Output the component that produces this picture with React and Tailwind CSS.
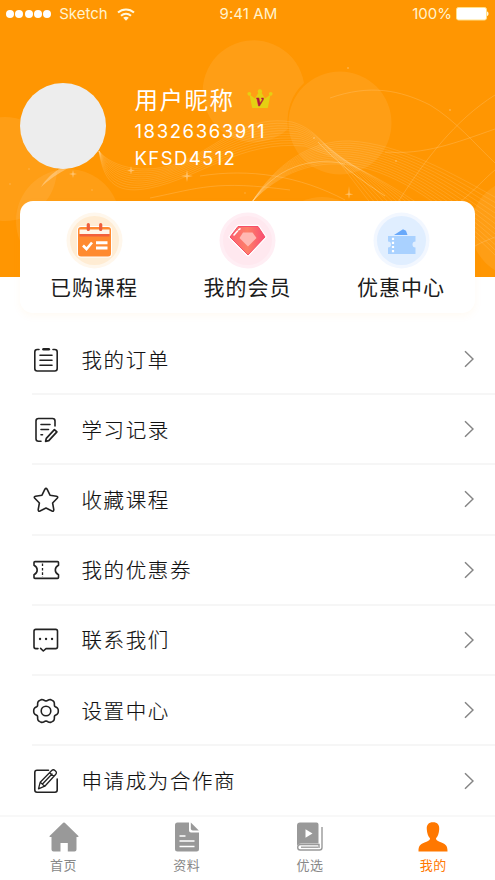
import React from 'react';

const menuItems = [
  { label: '我的订单', icon: OrderIcon },
  { label: '学习记录', icon: RecordIcon },
  { label: '收藏课程', icon: StarIcon },
  { label: '我的优惠券', icon: CouponIcon },
  { label: '联系我们', icon: ChatIcon },
  { label: '设置中心', icon: GearIcon },
  { label: '申请成为合作商', icon: EditIcon },
];

const shortcuts = [
  { label: '已购课程', icon: CalendarBadge },
  { label: '我的会员', icon: DiamondBadge },
  { label: '优惠中心', icon: TicketBadge },
];

const tabs = [
  { label: '首页', icon: HomeIcon },
  { label: '资料', icon: FileIcon },
  { label: '优选', icon: BookIcon },
  { label: '我的', icon: UserIcon, active: true },
];

// lines in between two curves, both given as flat lists of cubic points
function ribbon(from, to, count) {
  return Array.from({ length: count }, (_, i) => {
    const t = i / (count - 1);
    const p = from.map((v, k) => (v + (to[k] - v) * t).toFixed(1));
    return `M${p[0]} ${p[1]}C${p.slice(2).join(' ')}`;
  });
}

const waves = [
  ...ribbon(
    [99, 151, 112, 168, 150, 178, 190, 158, 225, 140, 250, 115, 292, 122, 320, 130, 330, 152, 372, 205],
    [99, 151, 104, 186, 120, 194, 150, 188, 200, 178, 240, 140, 305, 146, 330, 156, 370, 170, 420, 205],
    11
  ),
  ...ribbon(
    [252, 202, 275, 165, 310, 140, 350, 141, 400, 144, 450, 172, 500, 200],
    [252, 202, 280, 172, 315, 160, 350, 165, 400, 172, 450, 210, 500, 260],
    12
  ),
];

// six rounded teeth, one pointing right
const gearPoints = Array.from({ length: 72 }, (_, i) => {
  const a = (i / 72) * Math.PI * 2;
  const r = 11.4 + 1.2 * Math.cos(6 * a) - 0.3 * Math.cos(12 * a);
  return `${(14 + r * Math.cos(a)).toFixed(2)},${(14 + r * Math.sin(a)).toFixed(2)}`;
}).join(' ');

function HeaderArt() {
  return (
    <svg className="absolute inset-0" width="495" height="277" viewBox="0 0 495 277" fill="none">
      <g fill="#fff" fillOpacity="0.08">
        <path d="M304 83A51 51 0 1 0 288 129A52 52 0 0 1 304 83Z" />
        <circle cx="340" cy="123" r="51.5" />
        <circle cx="5" cy="169" r="52" />
        <circle cx="68" cy="221" r="52" />
        <circle cx="520" cy="228" r="49" />
        <circle cx="322" cy="248" r="51" />
      </g>
      <g stroke="#ffe3b0" strokeOpacity="0.24" strokeWidth="0.7">
        {waves.map((d) => <path key={d} d={d} />)}
      </g>
      <g stroke="#ffd9a0" strokeOpacity="0.25" strokeWidth="1">
        <path d="M330 98C370 84 400 90 430 105C455 120 475 144 495 163" />
        <path d="M398 202C425 160 455 120 495 95" />
        <path d="M385 152C425 155 455 143 495 129" />
        <path d="M460 202C475 190 485 178 495 170" />
        <path d="M200 176C250 168 300 176 345 200" />
        <path d="M150 198C200 188 215 180 290 190" />
        <path d="M475 246C482 242 488 240 495 237" />
      </g>
      <path d="M252 202C275 168 310 156 345 164" stroke="#ffe3b0" strokeOpacity="0.35" />
      <path d="M318 142C335 160 352 174 385 196" stroke="#ffe3b0" strokeOpacity="0.4" />
      <path d="M41 187C50 172 70 160 99 151C75 165 57 172 41 187Z" fill="#fff" fillOpacity="0.3" />
      <g fill="#fff" fillOpacity="0.4">
        <path d="M73 170l.7 3.3 3.3.7-3.3.7-.7 3.3-.7-3.3-3.3-.7 3.3-.7z" />
        <path d="M131 166l.7 3.8 3.3.7-3.3.7-.7 3.3-.7-3.3-3.3-.7 3.3-.7z" />
        <path d="M187 170l.9 5.3 5.1.7-5.1.9-.9 5.1-.9-5.1-5.1-.9 5.1-.7z" />
        <path d="M349 186l.7 7.5 3.5.7-3.5.7-.7 4-.7-4-3.5-.7 3.5-.7z" />
      </g>
      <g fill="#fff" fillOpacity="0.25">
        <circle cx="348" cy="68" r="1" />
        <circle cx="450" cy="110" r="1" />
        <circle cx="396" cy="161" r="1" />
        <circle cx="314" cy="138" r="1" />
        <circle cx="29" cy="169" r=".8" />
        <circle cx="10" cy="184" r=".8" />
        <circle cx="92" cy="190" r=".8" />
        <circle cx="245" cy="193" r=".8" />
      </g>
    </svg>
  );
}

function StatusBar() {
  return (
    <div className="relative grid h-7 grid-cols-3 items-center pr-[6px] pl-[6px] font-['Inter',sans-serif] text-[15px] text-[#fff3cf]">
      <div className="flex items-center">
        <div className="mr-[8px] flex gap-[1.3px]">
          {[0, 1, 2, 3, 4].map((i) => <span key={i} className="size-2 rounded-full bg-white" />)}
        </div>
        <span className="pt-px">Sketch</span>
        <svg className="ml-[9px]" width="18" height="13" viewBox="0 0 18 13" fill="none" stroke="#fff8e0" strokeWidth="2">
          <path d="M1 4.6C5.5 .5 12.5 .5 17 4.6M4 7.8C7 5.2 11 5.2 14 7.8" />
          <path d="M6.2 9.8C7.9 8.5 10.1 8.5 11.8 9.8L9 12.7Z" fill="#fff8e0" stroke="none" />
        </svg>
      </div>
      <span className="pt-px pl-[2px] text-center text-[15px] tracking-[0.1px]">9:41 AM</span>
      <div className="flex items-center justify-end gap-[4px]">
        <span className="pt-px">100%</span>
        <svg width="33" height="14" viewBox="0 0 33 14">
          <rect x=".5" y=".5" width="30" height="12.5" rx="2" fill="#fff" stroke="#ffe08a" />
          <path d="M31 4.5c2 .5 2 4 0 4.5z" fill="#fff8e0" />
        </svg>
      </div>
    </div>
  );
}

function Crown() {
  return (
    <svg className="mb-[2px]" width="26" height="20" viewBox="0 0 26 20" fill="#e6cf12">
      <path d="M2.5 5.5L8 9.5L11.5 3.5H14.3L18 9.5L23.5 5.5L20.8 19H5.2Z" />
      <circle cx="2.3" cy="4.8" r="1.9" />
      <circle cx="12.9" cy="2.4" r="2.2" />
      <circle cx="23.7" cy="4.8" r="1.9" />
      <text x="9.3" y="17" fontFamily="Liberation Serif" fontSize="16" fontWeight="700" fontStyle="italic" fill="#b3123c" stroke="#b3123c" strokeWidth=".4">v</text>
    </svg>
  );
}

function CalendarBadge() {
  return (
    <svg width="57" height="57" viewBox="0 0 57 57">
      <circle cx="28.5" cy="28.5" r="28" fill="#fff7ec" />
      <circle cx="28.5" cy="28.5" r="24.5" fill="#ffecd3" />
      <rect x="11" y="14" width="35" height="31.5" rx="4" fill="#fff" />
      <rect x="12" y="15" width="33" height="29.5" rx="3" fill="#ff8a30" />
      <path d="M13.5 17.5H43.5V22H13.5Z" fill="#fff6ea" />
      <path d="M13.5 22H43.5V24.5H13.5Z" fill="#f2603c" />
      <path d="M22.3 12.5V17.5M34.7 12.5V17.5" stroke="#ee5e3c" strokeWidth="3.2" strokeLinecap="round" />
      <path d="M17 33.5L20.5 37L26 30.5" fill="none" stroke="#fff" strokeWidth="2.6" />
      <path d="M30 30.7H41.5M30 36H41.5" stroke="#fff" strokeWidth="3" />
    </svg>
  );
}

function DiamondBadge() {
  return (
    <svg width="57" height="57" viewBox="0 0 57 57">
      <defs>
        <linearGradient id="gem" x1="0" y1="0" x2="1" y2="0">
          <stop offset="0" stopColor="#fc5f70" />
          <stop offset=".5" stopColor="#fd8068" />
          <stop offset="1" stopColor="#f94c71" />
        </linearGradient>
      </defs>
      <circle cx="28.5" cy="28.5" r="28" fill="#ffeef4" />
      <circle cx="28.5" cy="28.5" r="24.5" fill="#ffe8ef" />
      <path d="M19 14H39L46.5 25L29 43.5L10.5 25Z" fill="url(#gem)" stroke="#fff" strokeWidth="2.4" strokeLinejoin="round" />
      <path d="M19 14.5H39L46 25L29 43L11 25Z" fill="url(#gem)" stroke="#f65069" strokeWidth="1" strokeLinejoin="round" />
      <path d="M24 20.5H33.5L37.5 26L29 34.5L20.5 26Z" fill="#ffb8b3" />
      <path d="M15 23L18.5 19M19.8 17.7L21 16.9" stroke="#fff" strokeWidth="1.6" strokeLinecap="round" />
    </svg>
  );
}

function TicketBadge() {
  return (
    <svg width="57" height="57" viewBox="0 0 57 57">
      <circle cx="28.5" cy="28.5" r="28" fill="#f2f7ff" />
      <circle cx="28.5" cy="28.5" r="24.5" fill="#e0eeff" />
      <path d="M21 23L30 17.2L33 18.8L34.5 23Z" fill="#68a8fa" />
      <path d="M15 24H42.5V29.5A3 3 0 0 0 42.5 35.5V42H15V35.5A3 3 0 0 0 15 29.5Z" fill="#a9d1ff" />
      <path d="M20 25.7V41" stroke="#fff" strokeWidth="2.2" strokeDasharray="2.2 1.9" />
    </svg>
  );
}

function LineIcon({ children }) {
  return (
    <svg className="mt-px" width="28" height="28" viewBox="0 0 28 28" fill="none" stroke="#222" strokeWidth="1.6" strokeLinejoin="round" strokeLinecap="round">
      {children}
    </svg>
  );
}

function OrderIcon() {
  return (
    <LineIcon>
      <path d="M7 3.5H5.2Q2.8 3.5 2.8 6V22.5Q2.8 25 5.2 25H22.8Q25.2 25 25.2 22.5V6Q25.2 3.5 22.8 3.5H21" />
      <path d="M11.5 3.3H16.8" strokeWidth="2.6" />
      <path d="M8 9.2H20M8 14.2H20M8 19.2H20" />
    </LineIcon>
  );
}

function RecordIcon() {
  return (
    <LineIcon>
      <path d="M9 25.2H6.5Q4 25.2 4 22.7V5Q4 2.5 6.5 2.5H20.5Q23 2.5 23 5V10" />
      <path d="M9 8.5H18M9 13.5H16.5M9 18.8H10.5" />
      <path d="M14.3 22.4L22.4 13.6L24.9 15.9L16.8 24.7L13.6 25.3Z" strokeWidth="1.7" />
    </LineIcon>
  );
}

function StarIcon() {
  return (
    <LineIcon>
      <path d="M12.9 3.2Q14 1.5 15.1 3.2L18 9.2L24.5 10.2Q26.5 10.7 25.2 12.2L20.6 17L21.8 23.6Q21.8 25.7 20 25L14 22L8 25Q6.2 25.7 6.2 23.6L7.4 17L2.8 12.2Q1.5 10.7 3.5 10.2L10 9.2Z" />
    </LineIcon>
  );
}

function CouponIcon() {
  return (
    <LineIcon>
      <path d="M3 5.6H25.5Q26.5 5.6 26.5 6.6V9.3Q23.3 10.8 23.3 14Q23.3 17.2 26.5 18.7V21.4Q26.5 22.4 25.5 22.4H3Q2 22.4 2 21.4V18.7Q5.2 17.2 5.2 14Q5.2 10.8 2 9.3V6.6Q2 5.6 3 5.6Z" />
      <path d="M10.5 7.5V21" strokeWidth="1.3" strokeDasharray="2.6 1.8" strokeLinecap="butt" />
    </LineIcon>
  );
}

function ChatIcon() {
  return (
    <LineIcon>
      <path d="M6 22.6H3.8Q2 22.6 2 20.8V5.2Q2 3.4 3.8 3.4H23.7Q25.5 3.4 25.5 5.2V20.8Q25.5 22.6 23.7 22.6H14L11.3 25L8.6 22.4" />
      <path d="M8 13H8.1M14 13H14.1M20 13H20.1" strokeWidth="2.3" />
    </LineIcon>
  );
}

function GearIcon() {
  return (
    <LineIcon>
      <circle cx="14" cy="14" r="4.8" />
      <polygon points={gearPoints} />
    </LineIcon>
  );
}

function EditIcon() {
  return (
    <LineIcon>
      <path d="M16.5 3.2H5Q2.8 3.2 2.8 5.4V23Q2.8 25.2 5 25.2H23Q25.2 25.2 25.2 23V12" />
      <path d="M6.5 21.8L8.2 15.2L19.7 3.5Q21.3 2 23.2 3.7Q25.3 5.5 23.8 7.2L12.8 19.2ZM8.2 15.2L12.8 19.2M17.5 5.7L21.8 9.5M10.5 17L20 7" strokeWidth="1.3" />
    </LineIcon>
  );
}

function HomeIcon() {
  return (
    <svg width="30" height="30" viewBox="0 0 30 30" fill="#999">
      <path d="M14.2 .8Q15 .2 15.8 .8L29.4 14Q30 15 28.8 15H27.5V27.5Q27.5 29.5 25.5 29.5H18.8V21H11.5V29.5H4.5Q2.5 29.5 2.5 27.5V15H1.2Q0 15 .6 14Z" />
    </svg>
  );
}

function FileIcon() {
  return (
    <svg width="30" height="30" viewBox="0 0 30 30" fill="#999">
      <path d="M5.5 .5H17V8.5Q17 10.5 19 10.5H27V27Q27 29.5 24.5 29.5H5.5Q3 29.5 3 27V3Q3 .5 5.5 .5Z" />
      <path d="M18.8 .5L26.8 8.5H20.8Q18.8 8.5 18.8 6.5Z" />
      <path d="M7.5 14H13.5M7.5 19H22.5M7.5 24.5H22.5" stroke="#fff" strokeWidth="1.5" />
    </svg>
  );
}

function BookIcon() {
  return (
    <svg width="30" height="30" viewBox="0 0 30 30" fill="none">
      <path d="M5 .5H21.5Q23.5 .5 23.5 2.5V21.5H6Q3.5 21.5 2 23.5V3.5Q2 .5 5 .5Z" fill="#999" />
      <path d="M27 5V25.5Q27 28 24.5 28H5.2Q2.7 28 2.7 25.2Q2.7 22.5 5.5 22.5H24V26" stroke="#999" strokeWidth="1.4" />
      <path d="M6 25.2H23" stroke="#999" strokeWidth="1.3" />
      <path d="M10.5 7.2V15.8L17.5 11.5Z" fill="#fff" />
    </svg>
  );
}

function UserIcon() {
  return (
    <svg width="30" height="30" viewBox="0 0 30 30" fill="#ff7800">
      <path d="M15 .3C19.5 .3 21.7 3 21.2 7.5C20.9 11.5 19.8 14.7 18 16.3C18 18.2 19.2 18.7 21.5 19.7C27 22 29.7 22.5 29.5 29.5H.5C.3 22.5 3 22 8.5 19.7C10.8 18.7 12 18.2 12 16.3C10.2 14.7 9.1 11.5 8.8 7.5C8.3 3 10.5 .3 15 .3Z" />
    </svg>
  );
}

function Chevron() {
  return (
    <svg width="10" height="18" viewBox="0 0 10 18" fill="none" stroke="#858585" strokeWidth="1.5">
      <path d="M1 1.2L9 9L1 16.8" />
    </svg>
  );
}

function App() {
  return (
    <div className="flex h-[880px] w-[495px] flex-col overflow-hidden bg-white font-['Noto_Sans_CJK_SC',sans-serif]">
      <header className="relative h-[277px] shrink-0 bg-[#ff9602]">
        <HeaderArt />
        <StatusBar />
        <div className="relative flex pt-[55.4px] pl-5 text-white">
          <div className="size-[86px] rounded-full bg-[#ededed]" />
          <div className="ml-[28.5px] -mt-[1.4px]">
            <div className="flex h-[35px] items-center gap-[12px]">
              <h1 className="text-[23.5px] leading-[35px] font-normal tracking-[1.5px]">用户昵称</h1>
              <Crown />
            </div>
            <p className="mt-[0.6px] font-['Inter','Liberation_Sans',sans-serif] text-[18.5px] leading-[27px] tracking-[1.6px]">18326363911</p>
            <p className="font-['Inter','Liberation_Sans',sans-serif] text-[18.5px] leading-[27px] tracking-[1.4px]">KFSD4512</p>
          </div>
        </div>
      </header>

      <section className="relative z-10 mx-5 -mt-[76.5px] flex h-[112.5px] shrink-0 justify-between rounded-[13px] bg-white px-[30px] pt-[11.5px] shadow-[0_3px_8px_rgba(255,150,0,0.05)]">
        {shortcuts.map(({ label, icon: Icon }) => (
          <div key={label} className="flex flex-col items-center">
            <Icon />
            <span className="mt-[2px] text-[21px] leading-[30px] tracking-[1px] text-[#1c1c1c]">{label}</span>
          </div>
        ))}
      </section>

      <ul className="mt-[12px] flex-1">
        {menuItems.map(({ label, icon: Icon }) => (
          <li key={label} className="ml-8 flex h-[70.2px] items-center border-b-2 border-[#f6f6f6] pr-[21px] last:h-[69.2px] last:border-0">
            <Icon />
            <span className="ml-[21.5px] flex-1 text-[20.5px] font-light tracking-[1.6px] text-[#111] [-webkit-text-stroke:0.15px_#111]">{label}</span>
            <Chevron />
          </li>
        ))}
      </ul>

      <nav className="grid h-[65px] shrink-0 grid-cols-4 border-t-2 border-[#f8f8f8] bg-white pl-[2px]">
        {tabs.map(({ label, icon: Icon, active }) => (
          <div key={label} className={`flex flex-col items-center pt-[5px] text-[13px] tracking-[0.5px] ${active ? 'text-[#ff7800]' : 'text-[#888]'}`}>
            <Icon />
            <span className="mt-[3px] leading-[19px]">{label}</span>
          </div>
        ))}
      </nav>
    </div>
  );
}

export default App;
